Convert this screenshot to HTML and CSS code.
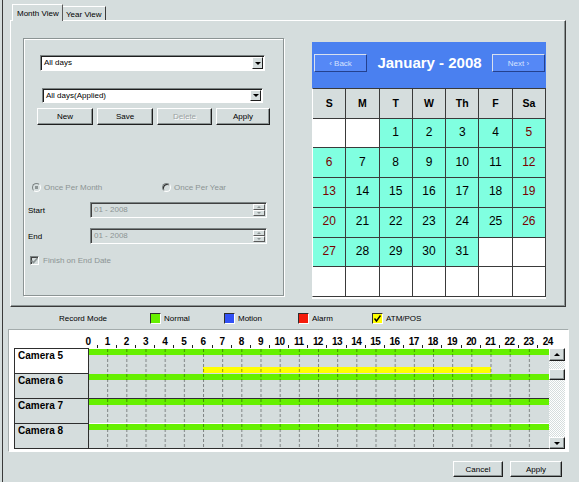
FILE: index.html
```html
<!DOCTYPE html>
<html>
<head>
<meta charset="utf-8">
<title>Schedule</title>
<link rel="stylesheet" href="styles.css">
</head>
<body>
<div class="frame">
  <div class="tabs">
    <div class="tab tab-active">Month View</div>
    <div class="tab tab-idle">Year View</div>
  </div>

  <div class="panel">
    <div class="group">
      <div class="combo combo-days"><span class="combo-text">All days</span><span class="combo-btn"><span class="tri-down"></span></span></div>
      <div class="combo combo-applied"><span class="combo-text">All days(Applied)</span><span class="combo-btn"><span class="tri-down"></span></span></div>
      <div class="btn-row">
        <div class="btn btn-new">New</div>
        <div class="btn btn-save">Save</div>
        <div class="btn btn-delete btn-disabled">Delete</div>
        <div class="btn btn-apply">Apply</div>
      </div>
      <div class="radio-row">
        <div class="radio radio-month"><span class="radio-dot radio-checked"></span><span class="dis-text">Once Per Month</span></div>
        <div class="radio radio-year"><span class="radio-dot radio-empty"></span><span class="dis-text">Once Per Year</span></div>
      </div>
      <div class="field-row field-start">
        <span class="field-label">Start</span>
        <div class="spin-input"><span class="spin-text">01 - 2008</span><span class="spin"><span class="spin-btn"><span class="tri-up-s"></span></span><span class="spin-btn"><span class="tri-down-s"></span></span></span></div>
      </div>
      <div class="field-row field-end">
        <span class="field-label">End</span>
        <div class="spin-input"><span class="spin-text">01 - 2008</span><span class="spin"><span class="spin-btn"><span class="tri-up-s"></span></span><span class="spin-btn"><span class="tri-down-s"></span></span></span></div>
      </div>
      <div class="check-row">
        <span class="checkbox"><svg width="7" height="7" viewBox="0 0 7 7"><polyline points="0.5,3.5 2.5,5.5 6.5,1" fill="none" stroke="#8c9494" stroke-width="1.6"/></svg></span>
        <span class="dis-text">Finish on End Date</span>
      </div>
    </div>

    <div class="calendar">
      <div class="cal-head">
        <div class="nav-btn">&#8249; Back</div>
        <div class="cal-title">January - 2008</div>
        <div class="nav-btn">Next &#8250;</div>
      </div>
      <div class="cal-grid">
        <div class="wd">S</div><div class="wd">M</div><div class="wd">T</div><div class="wd">W</div><div class="wd">Th</div><div class="wd">F</div><div class="wd">Sa</div>
        <div class="day empty"></div><div class="day empty"></div><div class="day">1</div><div class="day">2</div><div class="day">3</div><div class="day">4</div><div class="day we">5</div>
        <div class="day we">6</div><div class="day">7</div><div class="day">8</div><div class="day">9</div><div class="day">10</div><div class="day">11</div><div class="day we">12</div>
        <div class="day we">13</div><div class="day">14</div><div class="day">15</div><div class="day">16</div><div class="day">17</div><div class="day">18</div><div class="day we">19</div>
        <div class="day we">20</div><div class="day">21</div><div class="day">22</div><div class="day">23</div><div class="day">24</div><div class="day">25</div><div class="day we">26</div>
        <div class="day we">27</div><div class="day">28</div><div class="day">29</div><div class="day">30</div><div class="day">31</div><div class="day empty"></div><div class="day empty"></div>
        <div class="day empty"></div><div class="day empty"></div><div class="day empty"></div><div class="day empty"></div><div class="day empty"></div><div class="day empty"></div><div class="day empty"></div>
      </div>
    </div>
  </div>

  <div class="legend">
    <span class="legend-title">Record Mode</span>
    <span class="legend-item"><span class="swatch sw-normal"></span>Normal</span>
    <span class="legend-item"><span class="swatch sw-motion"></span>Motion</span>
    <span class="legend-item"><span class="swatch sw-alarm"></span>Alarm</span>
    <span class="legend-item"><span class="swatch sw-atm"><svg width="9" height="9" viewBox="0 0 9 9"><polyline points="1.5,4.5 3.5,7 7.5,1.5" fill="none" stroke="#000" stroke-width="1.4"/></svg></span>ATM/POS</span>
  </div>

  <div class="tl-box">
    <div class="tl-hours">
      <span class="hr">0</span><span class="hr">1</span><span class="hr">2</span><span class="hr">3</span><span class="hr">4</span><span class="hr">5</span><span class="hr">6</span><span class="hr">7</span><span class="hr">8</span><span class="hr">9</span><span class="hr">10</span><span class="hr">11</span><span class="hr">12</span><span class="hr">13</span><span class="hr">14</span><span class="hr">15</span><span class="hr">16</span><span class="hr">17</span><span class="hr">18</span><span class="hr">19</span><span class="hr">20</span><span class="hr">21</span><span class="hr">22</span><span class="hr">23</span><span class="hr">24</span>
    </div>
    <div class="tl-body">
      <div class="tl-labels">
        <div class="cam cam-sel">Camera 5</div>
        <div class="cam">Camera 6</div>
        <div class="cam">Camera 7</div>
        <div class="cam">Camera 8</div>
      </div>
      <div class="tl-chart">
        <div class="tl-row tl-row-a"><div class="bar bar-green"></div><div class="bar bar-yellow" style="margin-left:114px;width:288px"></div></div>
        <div class="tl-row tl-row-b"><div class="bar bar-green"></div></div>
        <div class="tl-row tl-row-c"><div class="bar bar-green"></div></div>
        <div class="tl-row tl-row-d"><div class="bar bar-green"></div></div>
        <svg class="tl-grid" width="460" height="100" viewBox="0 0 460 100">
          <defs>
            <pattern id="dash" x="-1" y="0" width="19.1667" height="5" patternUnits="userSpaceOnUse">
              <rect x="0" y="0" width="1" height="3" fill="#000" fill-opacity="0.4"/>
            </pattern>
          </defs>
          <rect x="0" y="0" width="445" height="100" fill="url(#dash)"/>
        </svg>
      </div>
      <div class="scrollbar">
        <div class="sb-btn sb-up"><span class="tri-up"></span></div>
        <div class="sb-track"><div class="sb-thumb"></div></div>
        <div class="sb-btn sb-down"><span class="tri-down"></span></div>
      </div>
    </div>
  </div>

  <div class="footer">
    <div class="btn btn-cancel">Cancel</div>
    <div class="btn btn-ok">Apply</div>
  </div>
</div>
</body>
</html>
```

FILE: styles.css
```css
* { box-sizing: border-box; }

html, body {
  margin: 0;
  padding: 0;
}

body {
  width: 579px;
  height: 482px;
  overflow: hidden;
  background: #d5dddd;
  font-family: "Liberation Sans", Arial, sans-serif;
  font-size: 8px;
  color: #000;
}

.frame {
  margin-left: 2px;
  height: 482px;
  border-left: 1px solid #3a3a3a;
  padding: 4px 0 0 7px;
}

/* Tabs */
.tabs {
  display: flex;
  align-items: flex-end;
  margin-left: 2px;
  height: 16px;
}

.tab {
  font-size: 8px;
  line-height: 13px;
  background: #d5dddd;
}

.tab-active {
  position: relative;
  z-index: 2;
  width: 51px;
  height: 17px;
  margin-bottom: -1px;
  border-top: 1px solid #fff;
  border-left: 1px solid #fff;
  border-right: 1px solid #5a5a5a;
  padding: 2px 0 0 4px;
}

.tab-idle {
  width: 43px;
  height: 14px;
  border-top: 1px solid #fff;
  border-right: 1px solid #3a3a3a;
  padding: 1px 0 0 3px;
}

/* Tab panel */
.panel {
  width: 556px;
  height: 287px;
  border-top: 1px solid #fff;
  border-left: 1px solid #fff;
  border-right: 1px solid #3a3a3a;
  border-bottom: 1px solid #3a3a3a;
  box-shadow: inset -1px -1px 0 #8c9494;
  display: flex;
  align-items: flex-start;
  gap: 28px;
  padding: 17px 0 0 12px;
}

/* Group box */
.group {
  width: 261px;
  height: 258px;
  border: 1px solid #8c9494;
  box-shadow: inset 1px 1px 0 #fff, 1px 1px 0 #fff;
  display: flex;
  flex-direction: column;
  align-items: flex-start;
}

.combo {
  display: flex;
  background: #fff;
  border: 1px solid;
  border-color: #7c8484 #fff #fff #7c8484;
  box-shadow: inset 1px 1px 0 #1e1e1e;
  padding: 1px 1px 1px 1px;
}

.combo-days {
  margin: 16px 0 0 16px;
  width: 225px;
  height: 16px;
}

.combo-applied {
  margin: 17px 0 0 18px;
  width: 221px;
  height: 15px;
}

.combo-text {
  flex: 1;
  font-size: 8px;
  line-height: 12px;
  padding-left: 2px;
}

.combo-btn {
  width: 11px;
  background: #d5dddd;
  border: 1px solid;
  border-color: #fff #1e1e1e #1e1e1e #fff;
  display: flex;
  align-items: center;
  justify-content: center;
}

.tri-down {
  width: 0;
  height: 0;
  border-left: 3px solid transparent;
  border-right: 3px solid transparent;
  border-top: 3px solid #000;
}

.tri-up {
  width: 0;
  height: 0;
  border-left: 3px solid transparent;
  border-right: 3px solid transparent;
  border-bottom: 3px solid #000;
}

.btn-row {
  display: flex;
  gap: 4px;
  margin: 5px 0 0 13px;
}

.btn {
  height: 17px;
  background: #d5dddd;
  border: 1px solid;
  border-color: #fff #1e1e1e #1e1e1e #fff;
  box-shadow: inset -1px -1px 0 #8c9494;
  display: flex;
  align-items: center;
  justify-content: center;
  font-size: 8px;
}

.btn-new, .btn-save { width: 56px; }
.btn-delete { width: 55px; }
.btn-apply { width: 54px; }

.btn-disabled {
  color: #9aa2a2;
  text-shadow: 1px 1px 0 #fff;
}

.radio-row {
  display: flex;
  align-items: center;
  margin: 57px 0 0 8px;
  height: 10px;
}

.radio {
  display: flex;
  align-items: center;
  gap: 3px;
}

.radio-month { width: 130px; }

.radio-dot {
  width: 9px;
  height: 9px;
  border-radius: 50%;
  border: 1px solid;
  border-color: #7c8484 #fff #fff #7c8484;
  background: #d5dddd;
}

.radio-checked {
  background: radial-gradient(circle, #8c9494 0 1.6px, #d5dddd 2px);
}

.radio-empty {
  box-shadow: inset 1px 1px 0 #2a2a2a;
}

.dis-text {
  color: #8c9494;
  font-size: 8px;
}

.field-row {
  display: flex;
  align-items: center;
  height: 16px;
}

.field-start { margin-top: 10px; }
.field-end { margin-top: 10px; }

.field-label {
  width: 66px;
  padding-left: 4px;
  font-size: 8px;
}

.spin-input {
  width: 177px;
  height: 16px;
  display: flex;
  background: #d5dddd;
  border: 1px solid;
  border-color: #7c8484 #fff #fff #7c8484;
  box-shadow: inset 1px 1px 0 #404040;
  padding: 1px 1px 1px 1px;
}

.spin-text {
  flex: 1;
  color: #8c9494;
  font-size: 8px;
  line-height: 12px;
  padding-left: 2px;
}

.spin {
  width: 12px;
  display: flex;
  flex-direction: column;
}

.spin-btn {
  flex: 1;
  background: #d5dddd;
  border: 1px solid;
  border-color: #fff #5a5a5a #5a5a5a #fff;
  display: flex;
  align-items: center;
  justify-content: center;
}

.tri-up-s {
  width: 0;
  height: 0;
  border-left: 2px solid transparent;
  border-right: 2px solid transparent;
  border-bottom: 2px solid #8c9494;
}

.tri-down-s {
  width: 0;
  height: 0;
  border-left: 2px solid transparent;
  border-right: 2px solid transparent;
  border-top: 2px solid #8c9494;
}

.check-row {
  display: flex;
  align-items: center;
  gap: 4px;
  margin: 12px 0 0 6px;
  height: 9px;
}

.checkbox {
  width: 9px;
  height: 9px;
  border: 1px solid;
  border-color: #7c8484 #fff #fff #7c8484;
  box-shadow: inset 1px 1px 0 #404040;
  background: #d5dddd;
  display: flex;
  align-items: center;
  justify-content: center;
}

/* Calendar */
.calendar {
  width: 234px;
  margin-top: 4px;
  border-bottom: 2px solid #fff;
}

.cal-head {
  height: 46px;
  background: #4a80f0;
  display: flex;
  align-items: flex-start;
  justify-content: space-between;
  padding: 12px 1px 0 2px;
}

.nav-btn {
  width: 53px;
  height: 18px;
  background: #5588f6;
  border: 1px solid;
  border-color: #d8e0ee #24418f #24418f #d8e0ee;
  color: #d6e2ff;
  font-size: 8px;
  display: flex;
  align-items: center;
  justify-content: center;
}

.cal-title {
  color: #fff;
  font-weight: bold;
  font-size: 15px;
  line-height: 18px;
  padding-top: 0;
}

.cal-grid {
  display: grid;
  grid-template-columns: repeat(7, 1fr);
  grid-template-rows: repeat(7, 28.71px);
  gap: 1px;
  background: #3a3a3a;
  border-top: 1px solid #3a3a3a;
  border-right: 1px solid #3a3a3a;
  border-bottom: 1px solid #3a3a3a;
  border-left: 1px solid #fff;
}

.wd {
  background: #d5dddd;
  font-weight: bold;
  font-size: 10.5px;
  display: flex;
  align-items: center;
  justify-content: center;
}

.day {
  background: #80ffe0;
  font-size: 12px;
  display: flex;
  align-items: center;
  justify-content: center;
  padding-bottom: 2px;
}

.day.we { color: #7a0000; }
.day.empty { background: #fff; }

/* Legend */
.legend {
  display: flex;
  align-items: center;
  height: 11px;
  margin: 6px 0 0 49px;
  font-size: 8px;
}

.legend-title {
  width: 91px;
}

.legend-item {
  width: 74px;
  display: flex;
  align-items: center;
  gap: 3px;
}

.swatch {
  width: 11px;
  height: 11px;
  border: 1px solid;
  border-color: #2e2e2e #fff #fff #2e2e2e;
  display: flex;
  align-items: center;
  justify-content: center;
}

.sw-normal { background: #66f000; }
.sw-motion { background: #3352f5; }
.sw-alarm { background: #f51c0c; }
.sw-atm { background: #ffff00; }

/* Timeline */
.tl-box {
  margin: 5px 0 0 -2px;
  width: 561px;
  height: 123px;
  background: #fff;
  border: 1px solid;
  border-color: #a4acac #fff #fff #a4acac;
}

.tl-hours {
  height: 18px;
  display: flex;
  padding-left: 69.42px;
}

.hr {
  flex: 0 0 19.1667px;
  text-align: center;
  font-weight: bold;
  font-size: 10px;
  letter-spacing: -0.6px;
  line-height: 10px;
  padding-top: 7px;
  background-image: linear-gradient(#1e1e1e, #1e1e1e);
  background-size: 1px 3px;
  background-repeat: no-repeat;
  background-position: right bottom;
}

.hr:last-child { background: none; }

.tl-body {
  display: flex;
  padding-left: 5px;
}

.tl-labels {
  width: 75px;
  border-top: 1px solid #2e2e2e;
  border-left: 1px solid #2e2e2e;
  border-right: 1px solid #2e2e2e;
}

.cam {
  height: 25px;
  border-bottom: 1px solid #2e2e2e;
  background: #d5dddd;
  font-weight: bold;
  font-size: 10px;
  line-height: 12px;
  padding: 1px 0 0 3px;
}

.cam-sel { background: #fff; }

.tl-chart {
  position: relative;
  width: 460px;
  border-top: 1px solid #fff;
}

.tl-row {
  height: 25px;
  background: #d5dddd;
  border-bottom: 1px solid #d5dddd;
  display: flex;
  flex-direction: column;
  justify-content: space-between;
}

.tl-row-b { border-bottom-color: #2e2e2e; }
.tl-row-c { border-bottom-color: #fff; }
.tl-row-d { border-bottom-color: #2e2e2e; }

.bar {
  height: 6px;
}

.bar-green {
  background: #66f000;
}

.bar-yellow {
  background: #ffff00;
}

.tl-grid {
  position: absolute;
  top: 0;
  left: 0;
  display: block;
}

.scrollbar {
  width: 16px;
  height: 101px;
  display: flex;
  flex-direction: column;
}

.sb-btn {
  background: #d5dddd;
  border: 1px solid;
  border-color: #fff #1e1e1e #1e1e1e #fff;
  box-shadow: inset -1px -1px 0 #8c9494;
  display: flex;
  align-items: center;
  justify-content: center;
}

.sb-up { height: 13px; }
.sb-down { height: 12px; }

.sb-track {
  flex: 1;
  background-color: #eef2f2;
  background-image: repeating-conic-gradient(#ffffff 0 25%, #d5dddd 0 50%);
  background-size: 2px 2px;
  padding-top: 8px;
}

.sb-thumb {
  height: 11px;
  background: #d5dddd;
  border: 1px solid;
  border-color: #fff #1e1e1e #1e1e1e #fff;
  box-shadow: inset -1px -1px 0 #8c9494;
}

/* Footer */
.footer {
  display: flex;
  justify-content: flex-end;
  gap: 7px;
  margin-top: 9px;
  padding-right: 17px;
}

.btn-cancel { width: 50px; height: 16px; }
.btn-ok { width: 52px; height: 16px; }
```
